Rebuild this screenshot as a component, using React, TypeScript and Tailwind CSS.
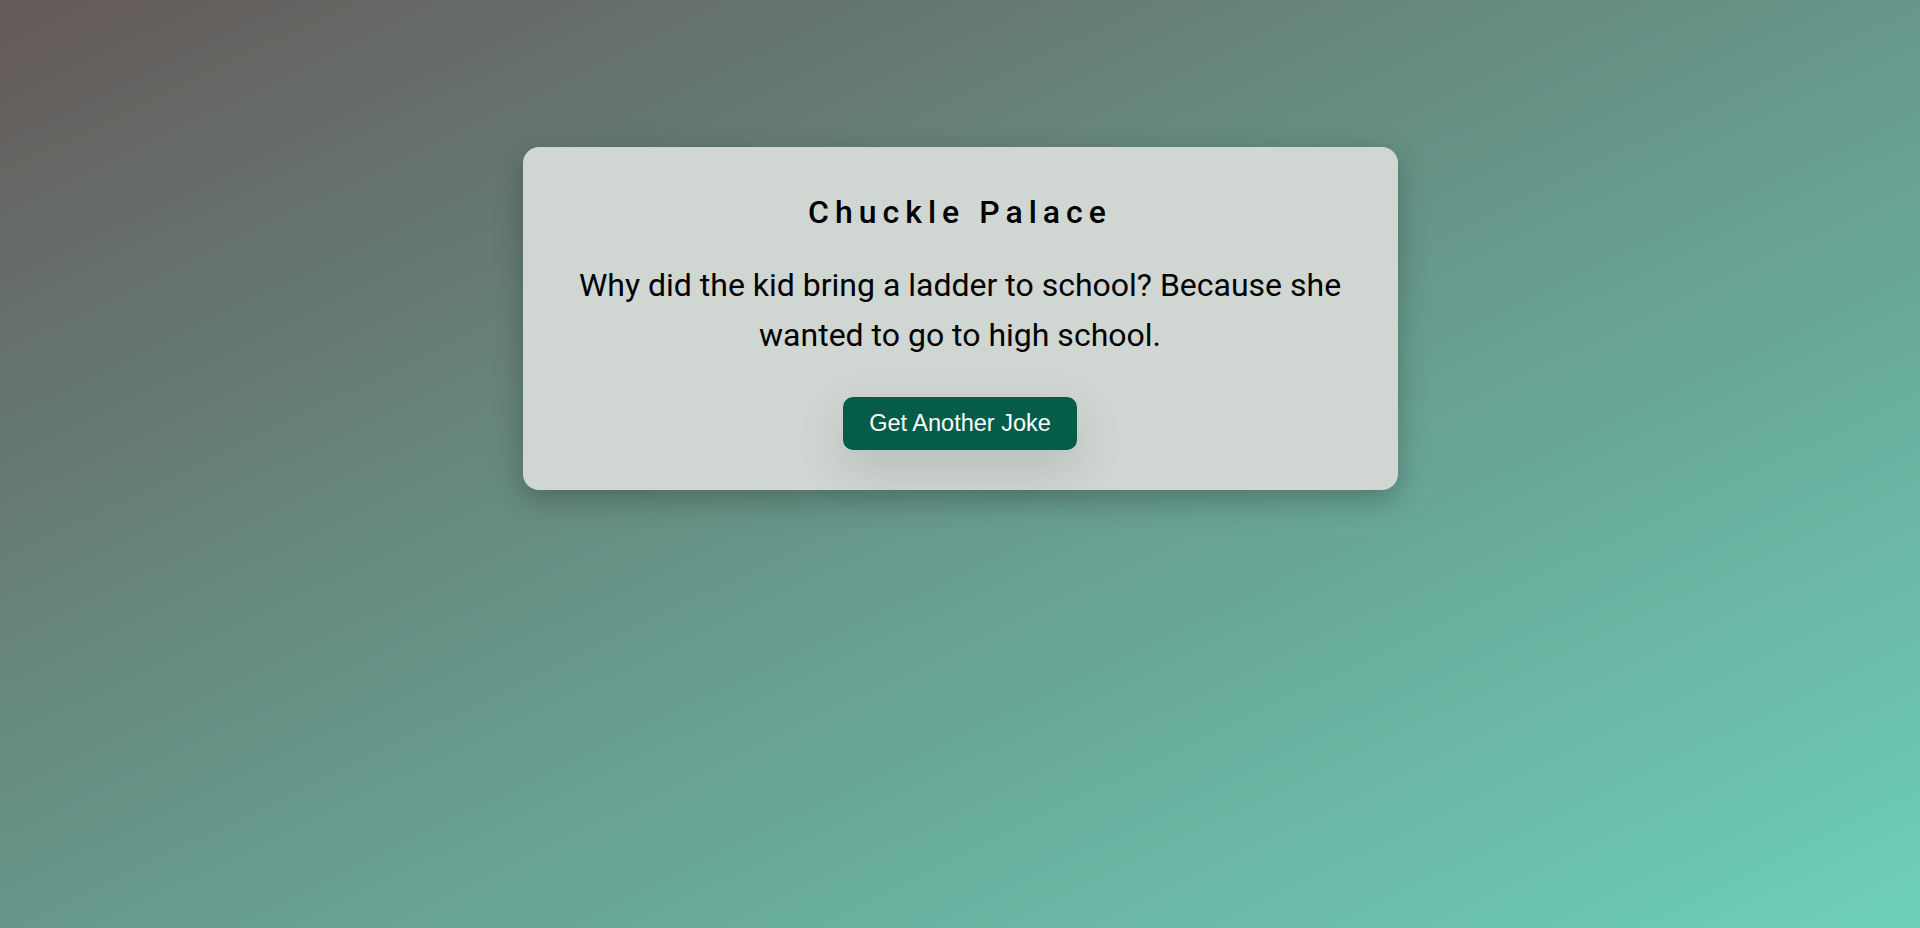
export default function App() {
  return (
    <div className="min-h-screen w-full bg-[linear-gradient(to_bottom_right,#655a5a,#67978a,#6dd0b9)] flex justify-center pt-[147px]">
      <div className="w-[875px] h-[343px] rounded-[16px] bg-[#d0d6d2] shadow-[0_10px_30px_rgba(0,0,0,0.25)] px-10 pt-[41px] flex flex-col items-center text-center">
        <h1 className="font-['Roboto',sans-serif] text-[32px] leading-[48px] font-medium tracking-[6px] text-black">
          Chuckle Palace
        </h1>
        <p className="mt-[24px] font-['Roboto',sans-serif] text-[32px] leading-[50px] text-black">
          Why did the kid bring a ladder to school? Because she wanted to go to high school.
        </p>
        <button className="mt-[37px] rounded-[10px] bg-[#055d49] px-[26px] h-[53px] font-['Liberation_Sans',Arial,sans-serif] text-[23.5px] text-white shadow-[0_18px_50px_rgba(0,0,0,0.13)]">
          Get Another Joke
        </button>
      </div>
    </div>
  )
}
